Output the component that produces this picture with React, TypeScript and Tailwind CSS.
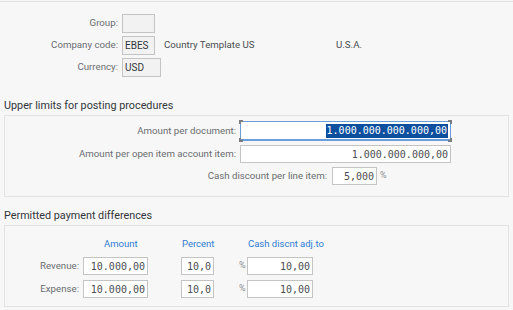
import React from "react";

const sans = { fontFamily: "Roboto, 'Liberation Sans', Arial, sans-serif" };
const mono = { fontFamily: "'DejaVu Sans Mono', 'Liberation Mono', monospace" };

function Corner({ pos }: { pos: string }) {
  return <span className={`absolute w-[4px] h-[4px] border-[#7a7d80] ${pos}`} />;
}

export default function App() {
  return (
    <div className="w-[513px] h-[310px] bg-[#f7f7f7] overflow-hidden text-[9.7px] text-[#32363a]" style={sans}>
      <div className="h-[2px] border-b border-[#e3e3e3]" />
      {/* Header fields */}
      <div className="flex flex-col gap-[3px] pt-[12px]">
        <div className="flex items-center h-[19px]">
          <div className="w-[118px] text-right text-[#6a6d70]">Group:</div>
          <div className="ml-[4px] w-[33px] h-[19px] border border-[#c4c4c4] bg-[#f2f2f2]" />
        </div>
        <div className="flex items-center h-[19px]">
          <div className="w-[118px] text-right text-[#6a6d70]">Company code:</div>
          <div className="ml-[4px] w-[33px] h-[19px] border border-[#c4c4c4] bg-[#f2f2f2] flex items-center pl-[2px] text-[10px]">EBES</div>
          <div className="ml-[9px] w-[172px] text-[#4a4d50]">Country Template US</div>
          <div className="text-[#4a4d50]">U.S.A.</div>
        </div>
        <div className="flex items-center h-[19px]">
          <div className="w-[118px] text-right text-[#6a6d70]">Currency:</div>
          <div className="ml-[4px] w-[39px] h-[19px] border border-[#c4c4c4] bg-[#f2f2f2] flex items-center pl-[2px] text-[10px]">USD</div>
        </div>
      </div>

      {/* Upper limits */}
      <div className="mt-[21px] px-[4px]">
        <div className="h-[17px] text-[10.8px] leading-[16px]">Upper limits for posting procedures</div>
        <div className="h-[82px] border border-[#e3e3e3] pt-[5px] flex flex-col gap-[4px]">
          <div className="flex items-center h-[20px]">
            <div className="w-[231px] text-right text-[#6a6d70]">Amount per document:</div>
            <div className="relative ml-[4px] w-[211px] h-[20px] border border-[#6a9fdc] border-b-2 bg-white flex items-center justify-end pr-[2px]">
              <Corner pos="-left-[2px] -top-[2px] border-l-2 border-t-2" />
              <Corner pos="-left-[2px] -bottom-[3px] border-l-2 border-b-2" />
              <Corner pos="-right-[2px] -top-[2px] border-r-2 border-t-2" />
              <Corner pos="-right-[2px] -bottom-[3px] border-r-2 border-b-2" />
              <span className="bg-[#0b4f9e] text-white text-[10px] leading-[14px] px-[1px]" style={mono}>1.000.000.000.000,00</span>
            </div>
          </div>
          <div className="flex items-center h-[18px]">
            <div className="w-[231px] text-right text-[#6a6d70]">Amount per open item account item:</div>
            <div className="ml-[4px] w-[211px] h-[18px] border border-[#c4c4c4] bg-white flex items-center justify-end pr-[2px] text-[10px] text-[#4a4d50]" style={mono}>1.000.000.000,00</div>
          </div>
          <div className="flex items-center h-[18px]">
            <div className="w-[322px] text-right text-[#6a6d70]">Cash discount per line item:</div>
            <div className="ml-[5px] w-[45px] h-[18px] border border-[#c4c4c4] bg-white flex items-center justify-end pr-[2px] text-[10px] text-[#4a4d50]" style={mono}>5,000</div>
            <div className="ml-[3px] text-[9px] text-[#8a8d90]">%</div>
          </div>
        </div>
      </div>

      {/* Permitted payment differences */}
      <div className="mt-[11px] px-[4px]">
        <div className="h-[17px] text-[10.8px] leading-[16px]">Permitted payment differences</div>
        <div className="h-[82px] border border-[#e3e3e3] pt-[10px]">
          <div className="flex items-center h-[16px] text-[#2f7bd3] text-[9.5px]">
            <div className="w-[99px]" />
            <div className="w-[78px]">Amount</div>
            <div className="w-[66px]">Percent</div>
            <div>Cash discnt adj.to</div>
          </div>
          <div className="mt-[5px] flex flex-col gap-[5px]">
            {["Revenue:", "Expense:"].map((l) => (
              <div key={l} className="flex items-center h-[18px]">
                <div className="w-[74px] text-right text-[#6a6d70]">{l}</div>
                <div className="ml-[4px] w-[65px] h-[18px] border border-[#c4c4c4] bg-white flex items-center justify-end pr-[2px] text-[10px] text-[#4a4d50]" style={mono}>10.000,00</div>
                <div className="ml-[33px] w-[33px] h-[18px] border border-[#c4c4c4] bg-white flex items-center justify-end pr-[2px] text-[10px] text-[#4a4d50]" style={mono}>10,0</div>
                <div className="ml-[25px] w-[8px] text-[9px] text-[#8a8d90]">%</div>
                <div className="w-[66px] h-[18px] border border-[#c4c4c4] bg-white flex items-center justify-end pr-[2px] text-[10px] text-[#4a4d50]" style={mono}>10,00</div>
              </div>
            ))}
          </div>
        </div>
      </div>
    </div>
  );
}
